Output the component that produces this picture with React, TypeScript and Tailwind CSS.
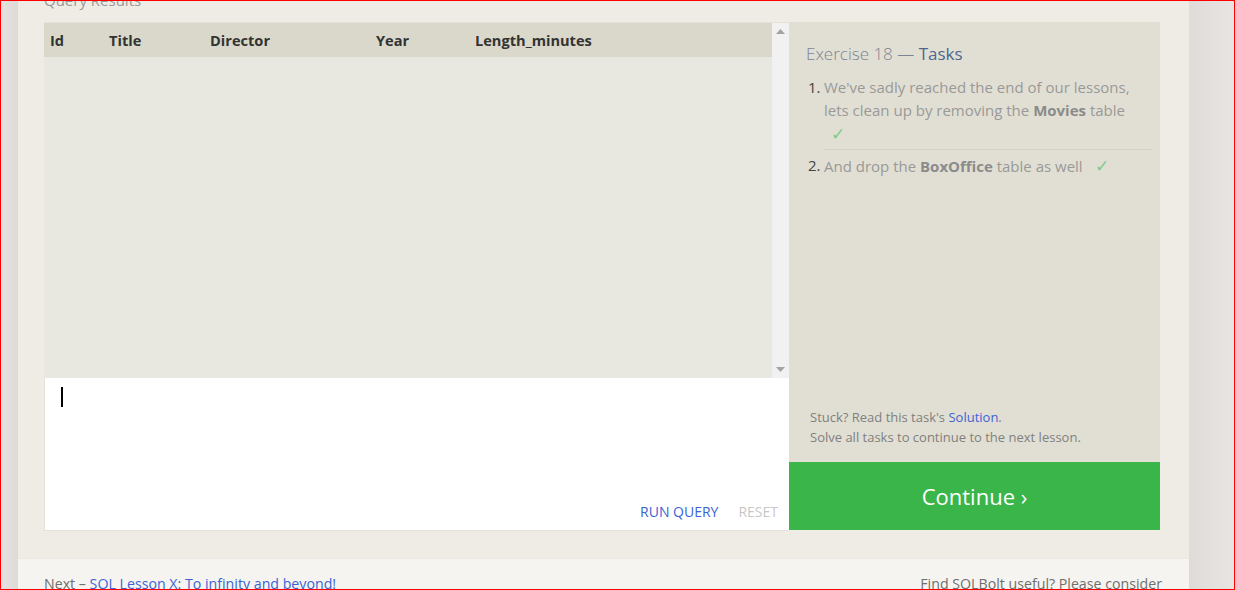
export default function App() {
  const cols = [
    { label: 'Id', w: 'w-[59px]' },
    { label: 'Title', w: 'w-[101px]' },
    { label: 'Director', w: 'w-[166px]' },
    { label: 'Year', w: 'w-[99px]' },
    { label: 'Length_minutes', w: 'w-[200px]' },
  ]

  return (
    <div className="w-[1235px] h-[590px] overflow-hidden border border-[#ff0000] flex font-['Open_Sans',sans-serif] bg-[#e8e4e1]">
      <div className="w-[17px] shrink-0 bg-gradient-to-r from-[#e6e2df] to-[#dedad6]" />

      <div className="w-[1171px] shrink-0 flex flex-col">
        {/* main exercise area */}
        <div className="bg-[#efece5] pl-[26px] pr-[28px] pb-[27px]">
          <div className="mt-[-12px] h-[33px] text-[15px] text-[#999999] leading-[22px]">Query Results</div>

          <div className="flex">
            <div className="w-[745px] flex flex-col">
              {/* results table */}
              <div className="h-[356px] flex border-t border-[#e4e2da] bg-[#e9e8e0]">
                <div className="flex-1">
                  <div className="h-[34px] bg-[#d9d8cb] flex items-center pl-[6px] pt-[2px] text-[14.6px] font-bold text-[#333333]">
                    {cols.map((c) => (
                      <div key={c.label} className={c.w}>{c.label}</div>
                    ))}
                  </div>
                </div>
                <div className="w-[17px] bg-[#f1f1f1] flex flex-col items-center justify-between py-[6px]">
                  <svg width="9" height="5" viewBox="0 0 9 5"><path d="M4.5 0 L9 5 L0 5 Z" fill="#a3a3a3" /></svg>
                  <svg width="9" height="5" viewBox="0 0 9 5"><path d="M0 0 L9 0 L4.5 5 Z" fill="#a3a3a3" /></svg>
                </div>
              </div>

              {/* editor */}
              <div className="h-[153px] bg-white border-l border-b border-[#e3e1da] flex flex-col justify-between">
                <div className="pl-[16px] pt-[9px]">
                  <div className="w-[2px] h-[20px] bg-black" />
                </div>
                <div className="flex justify-end gap-[20px] pr-[11px] pb-[8px] text-[14px]">
                  <span className="text-[#3b64d6]">RUN QUERY</span>
                  <span className="text-[#c8c8c8]">RESET</span>
                </div>
              </div>
            </div>

            {/* tasks panel */}
            <div className="w-[371px] flex flex-col">
              <div className="h-[440px] bg-[#e1dfd3] flex flex-col pl-[17px] pr-[8px]">
                <div className="mt-[20px] text-[17px] font-light text-[#7b8594] leading-[24px]">
                  Exercise 18 — <span className="text-[#4d6791] font-normal">Tasks</span>
                </div>
                <ol className="mt-[10px] text-[15px] leading-[23px] text-[#999999]">
                  <li className="flex pb-[4px]">
                    <span className="w-[18px] pl-[2px] text-[#444444]">1.</span>
                    <div className="flex-1 border-b border-[#d4d2c6] pb-[4px]">
                      We've sadly reached the end of our lessons, lets clean up by removing the{' '}
                      <b className="text-[#8b8b8b]">Movies</b> table
                      <div className="pl-[7px] text-[17px] text-[#7fcb8c]">✓</div>
                    </div>
                  </li>
                  <li className="flex">
                    <span className="w-[18px] pl-[2px] text-[#444444]">2.</span>
                    <div className="flex-1">
                      And drop the <b className="text-[#8b8b8b]">BoxOffice</b> table as well
                      <span className="pl-[12px] text-[17px] text-[#7fcb8c]">✓</span>
                    </div>
                  </li>
                </ol>
                <div className="mt-auto pb-[15px] pl-[4px] text-[13px] leading-[20px] text-[#808080]">
                  <div>
                    Stuck? Read this task's <span className="text-[#3b64d6]">Solution</span>.
                  </div>
                  <div>Solve all tasks to continue to the next lesson.</div>
                </div>
              </div>
              <div className="h-[68px] bg-[#39b54a] flex items-center justify-center text-white text-[22px]">
                Continue ›
              </div>
            </div>
          </div>
        </div>

        {/* footer */}
        <div className="flex-1 bg-[#f5f4f0] border-t border-[#ebe9e3] flex justify-between pl-[26px] pr-[27px] pt-[14px] text-[14.2px] text-[#6f6f6f]">
          <div>
            Next – <span className="text-[#3b64d6] underline">SQL Lesson X: To infinity and beyond!</span>
          </div>
          <div>Find SQLBolt useful? Please consider</div>
        </div>
      </div>

      <div className="flex-1 bg-gradient-to-r from-[#dfdbd8] to-[#e9e5e2]" />
    </div>
  )
}
